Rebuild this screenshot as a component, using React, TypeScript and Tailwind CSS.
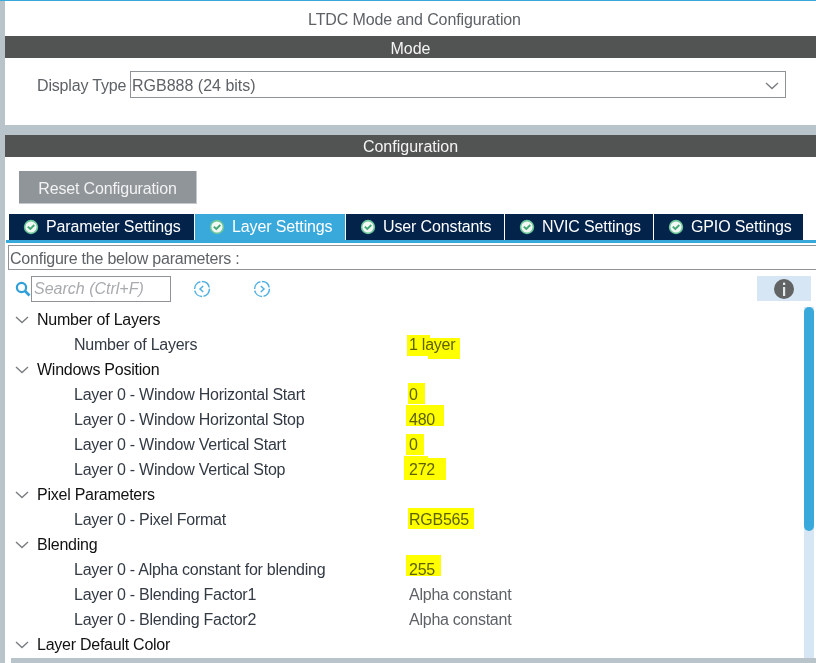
import React from 'react';

const tabs = [
  { label: 'Parameter Settings', width: 'w-[185px]', active: false },
  { label: 'Layer Settings', width: 'w-[150px]', active: true },
  { label: 'User Constants', width: 'w-[158px]', active: false },
  { label: 'NVIC Settings', width: 'w-[148px]', active: false },
  { label: 'GPIO Settings', width: 'w-[149px]', active: false },
];

type Row = {
  label: string;
  group?: boolean;
  value?: string;
  marks?: string[];
};

const rows: Row[] = [
  { label: 'Number of Layers', group: true },
  {
    label: 'Number of Layers',
    value: '1 layer',
    marks: ['left-[-2px] top-[2px] w-[23px] h-[21px]', 'left-[19px] top-[5px] w-[32px] h-[21px]'],
  },
  { label: 'Windows Position', group: true },
  { label: 'Layer 0 - Window Horizontal Start', value: '0', marks: ['left-[-1px] top-[0px] w-[17px] h-[21px]'] },
  { label: 'Layer 0 - Window Horizontal Stop', value: '480', marks: ['left-[-3px] top-[-3px] w-[38px] h-[21px]'] },
  { label: 'Layer 0 - Window Vertical Start', value: '0', marks: ['left-[-3px] top-[1px] w-[18px] h-[21px]'] },
  {
    label: 'Layer 0 - Window Vertical Stop',
    value: '272',
    marks: ['left-[-5px] top-[-2px] w-[24px] h-[8px]', 'left-[-5px] top-[0px] w-[42px] h-[22px]'],
  },
  { label: 'Pixel Parameters', group: true },
  { label: 'Layer 0 - Pixel Format', value: 'RGB565', marks: ['left-[-1px] top-[0px] w-[66px] h-[21px]'] },
  { label: 'Blending', group: true },
  { label: 'Layer 0 - Alpha constant for blending', value: '255', marks: ['left-[-3px] top-[-3px] w-[35px] h-[21px]'] },
  { label: 'Layer 0 - Blending Factor1', value: 'Alpha constant' },
  { label: 'Layer 0 - Blending Factor2', value: 'Alpha constant' },
  { label: 'Layer Default Color', group: true },
];

function CheckBadge() {
  return (
    <svg width="16" height="16" viewBox="0 0 16 16" className="shrink-0">
      <circle cx="8" cy="8" r="7.2" fill="#6cc79a" />
      <circle cx="8" cy="8" r="5.6" fill="#f2f8f4" />
      <path d="M4.8 7.6 L7.3 10 L11.3 6" fill="none" stroke="#3fa873" strokeWidth="1.8" />
    </svg>
  );
}

function SectionBar({ title, offset }: { title: string; offset: string }) {
  return (
    <div className={`h-[22px] bg-[#525453] text-[#f4f4f4] flex items-center justify-center text-[16px] leading-none ${offset}`}>
      {title}
    </div>
  );
}

function NavIcon({ dir }: { dir: 'left' | 'right' }) {
  return (
    <svg width="18" height="18" viewBox="0 0 18 18">
      <circle cx="9" cy="9" r="7.4" fill="none" stroke="#4fb0e0" strokeWidth="1.5" strokeDasharray="10 1.5" />
      <path
        d={dir === 'left' ? 'M10.2 6 L7 9 L10.2 12' : 'M7.8 6 L11 9 L7.8 12'}
        fill="none"
        stroke="#4fb0e0"
        strokeWidth="1.5"
      />
    </svg>
  );
}

function Chevron({ className }: { className: string }) {
  return (
    <svg width="14" height="8" viewBox="0 0 14 8" className={`shrink-0 ${className}`}>
      <path d="M1 1 L7 6.5 L13 1" fill="none" stroke="#7a7e81" strokeWidth="1.4" />
    </svg>
  );
}

export default function App() {
  return (
    <div className="w-[816px] h-[663px] overflow-hidden bg-white flex flex-col font-['Liberation_Sans',Arial,sans-serif] text-[16px]">
      <div className="h-px bg-[#39a9dc] shrink-0"></div>
      <div className="flex flex-1 min-h-0">
        <div className="w-[5px] bg-[#b8c4ca] shrink-0"></div>
        <div className="flex-1 flex flex-col min-w-0">
          <div className="h-[35px] flex items-center justify-center pl-[8px] pt-[2px] tracking-[-0.11px] text-[#5e6266]">
            LTDC Mode and Configuration
          </div>
          <SectionBar title="Mode" offset="pt-[3px]" />

          <div className="h-[67px] pt-[13px] pl-[32px] flex items-start">
            <span className="h-[27px] pt-[2px] flex items-center text-[#5e6266] w-[93px] tracking-[-0.17px]">Display Type</span>
            <div className="w-[656px] h-[27px] pt-[2px] border border-[#8f9396] flex items-center justify-between pl-px pr-[5px] text-[#5e6266]">
              <span>RGB888 (24 bits)</span>
              <Chevron className="mr-px" />
            </div>
          </div>

          <div className="h-[10px] bg-[#b8c4ca]"></div>
          <SectionBar title="Configuration" offset="pt-[2px]" />

          <div className="pt-[14px] pl-[14px]">
            <div className="w-[178px] h-[33px] pt-[3px] bg-[#90959a] border-r border-b border-[#c4c8cb] text-[#f2f2f2] tracking-[-0.16px] flex items-center justify-center">
              Reset Configuration
            </div>
          </div>

          <div className="mt-[10px] pl-[4px] flex gap-px h-[26px] tracking-[-0.13px]">
            {tabs.map(tab => (
              <div
                key={tab.label}
                className={`${tab.width} flex items-center pl-[14px] gap-[7px] text-white ${tab.active ? 'bg-[#39a9dc]' : 'bg-[#03234b]'}`}
              >
                <CheckBadge />
                <span>{tab.label}</span>
              </div>
            ))}
          </div>
          <div className="ml-px h-[3px] bg-[#39a9dc]"></div>

          <div className="ml-[3px] mt-[2px] h-[25px] pt-[2px] border border-r-0 border-[#8f9396] flex items-center pl-px tracking-[-0.22px] text-[#5e6266]">
            Configure the below parameters :
          </div>

          <div className="h-[37px] pl-[10px] flex items-center relative">
            <svg width="16" height="16" viewBox="0 0 16 16" className="shrink-0">
              <circle cx="6.5" cy="6.5" r="4.6" fill="none" stroke="#2f9fd8" strokeWidth="2.2" />
              <path d="M10 10 L14.5 14.5" stroke="#2f9fd8" strokeWidth="2.6" />
            </svg>
            <div className="w-[140px] h-[26px] border border-[#8f9396] flex items-center pl-[2px] italic text-[#a8abae]">
              Search (Ctrl+F)
            </div>
            <div className="ml-[22px]">
              <NavIcon dir="left" />
            </div>
            <div className="ml-[42px]">
              <NavIcon dir="right" />
            </div>
            <div className="ml-auto mr-[5px] w-[54px] h-[25px] bg-[#d7e6f4] flex items-center justify-center">
              <svg width="20" height="20" viewBox="0 0 20 20">
                <circle cx="10" cy="10" r="10" fill="#626365" />
                <rect x="9" y="8" width="2.2" height="9" fill="#e4e9ec" />
                <rect x="9" y="3.6" width="2.2" height="2.4" fill="#e4e9ec" />
              </svg>
            </div>
          </div>

          <div className="flex-1 min-h-0 flex">
            <div className="flex-1 min-w-0 tracking-[-0.25px]">
              {rows.map((row, i) =>
                row.group ? (
                  <div key={i} className="h-[25px] flex items-center text-[#111111]">
                    <Chevron className="ml-[10px] mr-[8px]" />
                    <span>{row.label}</span>
                  </div>
                ) : (
                  <div key={i} className="h-[25px] flex items-center">
                    <span className="ml-[69px] w-[335px] text-[#333a44]">{row.label}</span>
                    <span className="relative text-[#5e6266]">
                      {row.value}
                      {row.marks?.map(mark => (
                        <span key={mark} className={`absolute bg-[#ffff00] mix-blend-multiply ${mark}`}></span>
                      ))}
                    </span>
                  </div>
                )
              )}
            </div>
            <div className="w-[10px] mr-[2px] h-[351px] bg-[#d7e6f4]">
              <div className="h-[224px] bg-[#39a9dc] rounded-[5px]"></div>
            </div>
          </div>

          <div className="ml-[6px] h-[5px] bg-[#b8c4ca] shrink-0"></div>
        </div>
      </div>
    </div>
  );
}
